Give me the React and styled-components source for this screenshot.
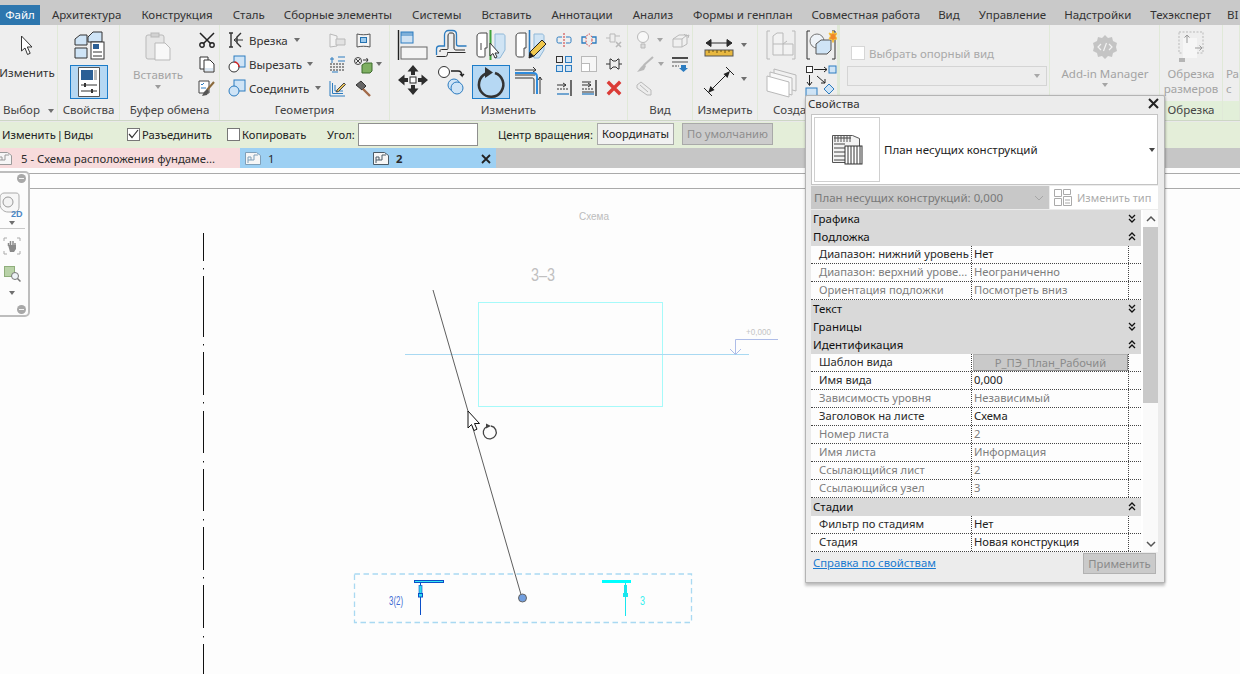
import React from "react";
import styled, { createGlobalStyle } from "styled-components";

const GlobalStyle = createGlobalStyle`
  html, body {
    margin: 0;
    padding: 0;
    background: #fdfdfd;
    overflow: hidden;
  }
  * { box-sizing: border-box; }
`;

const Page = styled.div`
  position: relative;
  width: 1240px;
  height: 674px;
  overflow: hidden;
  display: flex;
  flex-direction: column;
  font-family: "Noto Sans", "Liberation Sans", sans-serif;
  font-size: 11.5px;
  color: #333;
  background: #fdfdfd;
`;

/* menu */
const MenuBar = styled.div`
  height: 25px;
  flex: none;
  display: flex;
  align-items: flex-end;
  background: #c9c9c9;
  white-space: nowrap;
  overflow: hidden;
`;
const FileTab = styled.div`
  width: 40px;
  height: 20px;
  flex: none;
  background: #2d76ae;
  color: #fff;
  text-align: center;
  line-height: 20px;
  margin-right: 12px;
`;
const MenuItem = styled.div`
  height: 20px;
  flex: none;
  line-height: 20px;
  margin-right: ${(p) => p.$gap}px;
  color: #333;
`;

/* ribbon */
const Ribbon = styled.div`
  height: 96px;
  flex: none;
  display: flex;
  background: #eeeeee;
  border-bottom: 1px solid #cdd6c5;
  overflow: hidden;
`;
const Panel = styled.div`
  width: ${(p) => p.$w}px;
  flex: none;
  display: flex;
  flex-direction: column;
  border-right: ${(p) => p.$edge || 1}px solid #e0e9d8;
`;
const PanelBody = styled.div`
  height: 76px;
  flex: none;
  display: flex;
  padding: ${(p) => p.$pad || "0"};
  gap: ${(p) => p.$gap || 0}px;
  overflow: hidden;
`;
const PanelLabel = styled.div`
  height: 19px;
  line-height: 18px;
  text-align: ${(p) => p.$align || "center"};
  padding-left: ${(p) => p.$pl || 0}px;
  white-space: nowrap;
  overflow: hidden;
  color: #444;
  background: ${(p) => (p.$green ? "#e2efd9" : "transparent")};
`;
const BigTool = styled.div`
  width: ${(p) => p.$w || 58}px;
  display: flex;
  flex-direction: column;
  align-items: center;
  padding-top: ${(p) => p.$top || 7}px;
  line-height: 15px;
  color: ${(p) => (p.$off ? "#a3a3a3" : "#333")};
  white-space: nowrap;
  flex: none;
`;
const ToolText = styled.div`
  margin-top: ${(p) => p.$mt || 0}px;
  text-align: ${(p) => p.$align || "center"};
`;
const Caret = styled.span`
  display: inline-block;
  flex: none;
  width: 0;
  height: 0;
  border-left: 3.5px solid transparent;
  border-right: 3.5px solid transparent;
  border-top: 4px solid ${(p) => p.$c || "#6f6f6f"};
  margin: ${(p) => p.$m || "0"};
`;
const SelectedTool = styled.div`
  display: flex;
  align-items: center;
  justify-content: center;
  width: ${(p) => p.$w}px;
  height: ${(p) => p.$h}px;
  background: #b6d8f3;
  border: 1px solid #1c7cc9;
`;
const Column = styled.div`
  display: flex;
  flex-direction: column;
  align-items: ${(p) => p.$align || "flex-start"};
  gap: ${(p) => p.$gap || 0}px;
  padding-top: ${(p) => p.$top || 0}px;
  margin-left: ${(p) => p.$ml || 0}px;
  flex: none;
`;
const SmallRow = styled.div`
  height: 24px;
  display: flex;
  align-items: center;
  gap: ${(p) => p.$gap || 0}px;
  white-space: nowrap;
  color: #333;
`;
const IconSlot = styled.div`
  width: ${(p) => p.$w || 24}px;
  height: ${(p) => p.$h || 24}px;
  margin-top: ${(p) => p.$mt || 0}px;
  display: flex;
  align-items: center;
  justify-content: center;
  flex: none;
`;
const ToolGrid = styled.div`
  display: grid;
  grid-template-columns: repeat(${(p) => p.$cols}, ${(p) => p.$cw}px);
  grid-auto-rows: ${(p) => p.$rh}px;
  justify-items: center;
  align-items: ${(p) => p.$items || "center"};
  margin: ${(p) => p.$m || "0"};
  flex: none;
`;
const CheckRow = styled.div`
  display: flex;
  align-items: center;
  gap: 4px;
  color: ${(p) => (p.$off ? "#a9a9a9" : "#333")};
  margin-top: 21px;
  margin-left: 11px;
  height: 14px;
  white-space: nowrap;
`;
const BoxMark = styled.span`
  width: ${(p) => p.$s || 13}px;
  height: ${(p) => p.$s || 13}px;
  flex: none;
  background: #fff;
  border: 1px solid ${(p) => p.$c || "#777"};
  display: flex;
  align-items: center;
  justify-content: center;
`;
const DisabledCombo = styled.div`
  width: 200px;
  height: 20px;
  margin: 6px 0 0 7px;
  background: #ededed;
  border: 1px solid #d4d4d4;
  display: flex;
  align-items: center;
  justify-content: flex-end;
  padding-right: 6px;
`;

/* options bar */
const OptionsBar = styled.div`
  height: 27px;
  flex: none;
  display: flex;
  align-items: center;
  padding: 0 0 2px 2px;
  background: #e4eed9;
  color: #222;
  font-size: 11.2px;
  white-space: nowrap;
  border-top: 1px solid #e9e9e9;
`;
const OptionLabel = styled.div`
  display: flex;
  align-items: center;
  gap: 2px;
  margin-left: ${(p) => p.$ml || 0}px;
  width: ${(p) => (p.$w ? `${p.$w}px` : "auto")};
  word-spacing: ${(p) => p.$ws || 0}px;
  flex: none;
`;
const AngleInput = styled.div`
  width: 120px;
  height: 23px;
  background: #fff;
  border: 1px solid #8f8f8f;
  flex: none;
`;
const OptionButton = styled.div`
  height: 22px;
  line-height: 19px;
  padding: 0 2px;
  text-align: center;
  width: ${(p) => p.$w}px;
  margin-left: ${(p) => p.$ml}px;
  background: ${(p) => (p.$off ? "#cccccc" : "#f1f1f1")};
  color: ${(p) => (p.$off ? "#8e8e8e" : "#222")};
  border: 1px solid #a9a9a9;
  flex: none;
`;

/* view tabs */
const TabStrip = styled.div`
  height: 20px;
  flex: none;
  display: flex;
  background: #c6c6c6;
  white-space: nowrap;
  font-size: 11.3px;
  overflow: hidden;
`;
const ViewTab = styled.div`
  width: ${(p) => p.$w}px;
  display: flex;
  align-items: center;
  padding: 1px 0 0 ${(p) => p.$pl}px;
  gap: ${(p) => p.$gap}px;
  background: ${(p) => p.$bg};
  color: #2b2b2b;
  font-weight: ${(p) => (p.$active ? 700 : 400)};
  flex: none;
  overflow: hidden;
`;
const TabClose = styled.span`
  margin-left: auto;
  margin-right: 5px;
  display: flex;
`;

/* canvas */
const Canvas = styled.div`
  position: relative;
  flex: 1;
  background: #fdfdfd;
`;
const CanvasRule = styled.div`
  height: ${(p) => p.$h}px;
  border-bottom: 1px solid #a9a9a9;
`;
const Drawing = styled.svg`
  position: absolute;
  left: 0;
  top: 0;
`;
const DrawText = styled.text`
  font-family: "Liberation Sans", sans-serif;
`;
const NavBar = styled.div`
  position: absolute;
  left: -4px;
  top: 3px;
  width: 34px;
  height: 146px;
  background: #fcfcfc;
  border: 2px solid #bdbdbd;
  border-radius: 5px;
  display: flex;
  flex-direction: column;
  align-items: center;
  padding: 1px 2px 0 0;
`;
const NavDot = styled.div`
  align-self: flex-end;
  margin-right: 0;
  width: 9px;
  height: 9px;
  border-radius: 50%;
  background: #a8a8a8;
  display: flex;
  align-items: center;
  justify-content: center;
  margin-top: ${(p) => p.$mt || 0}px;
  &::after {
    content: "";
    width: 5px;
    height: 1px;
    background: #f4f4f4;
  }
`;
const NavRule = styled.div`
  width: 26px;
  height: 1px;
  background: #c9c9c9;
  margin: 3px 0 6px;
`;

/* properties palette */
const Palette = styled.div`
  position: absolute;
  left: 805px;
  top: 95px;
  width: 360px;
  height: 488px;
  background: #ececec;
  border: 1px solid #b4b4b4;
  border-radius: 2px 2px 0 0;
  box-shadow: 0 3px 3px rgba(0, 0, 0, 0.22), 1px 0 2px rgba(0, 0, 0, 0.15);
  padding: 0 6px 0 5px;
  display: flex;
  flex-direction: column;
`;
const PaletteTitle = styled.div`
  height: 18px;
  flex: none;
  display: flex;
  align-items: center;
  justify-content: space-between;
  margin: 0 -1px 0 -3px;
  padding-bottom: 3px;
  color: #333;
`;
const TypeBox = styled.div`
  height: 71px;
  flex: none;
  background: #fff;
  border: 1px solid #c4c4c4;
  padding: 2px;
  display: flex;
  align-items: center;
  color: #222;
`;
const TypeThumb = styled.div`
  width: 66px;
  height: 65px;
  flex: none;
  border: 1px solid #cfcfcf;
  display: flex;
  align-items: center;
  justify-content: center;
  margin-right: 4px;
`;
const TypeRow = styled.div`
  height: 25px;
  flex: none;
  display: flex;
  padding-top: 1px;
`;
const InstanceCombo = styled.div`
  width: 238px;
  height: 23px;
  flex: none;
  background: #c8c8c8;
  color: #797979;
  display: flex;
  align-items: center;
  justify-content: space-between;
  padding: 0 5px 0 3px;
`;
const EditType = styled.div`
  flex: 1;
  height: 23px;
  background: #fff;
  color: #acacac;
  font-size: 11px;
  display: flex;
  align-items: center;
  gap: 5px;
  padding-left: 4px;
  margin-left: 1px;
  white-space: nowrap;
`;
const TableWrap = styled.div`
  height: 342px;
  flex: none;
  display: flex;
  background: #fff;
  overflow: hidden;
`;
const Table = styled.div`
  width: 330px;
  flex: none;
`;
const SectionRow = styled.div`
  height: 18px;
  display: flex;
  align-items: center;
  justify-content: space-between;
  padding: 0 5px 1px 2px;
  background: #d9d9d9;
  color: #111;
`;
const PropRow = styled.div`
  height: 18px;
  display: grid;
  grid-template-columns: 161px 157px 1fr;
  border-bottom: 1px dotted #444;
  background: #fdfdfd;
  font-size: 11.2px;
`;
const PropName = styled.div`
  padding-left: 8px;
  line-height: 16px;
  color: ${(p) => (p.$dim ? "#7d7d7d" : "#2a2a2a")};
  white-space: nowrap;
  overflow: hidden;
  border-right: 1px dotted #444;
`;
const PropValue = styled.div`
  padding-left: 2px;
  line-height: 16px;
  color: ${(p) => (p.$dim ? "#7d7d7d" : "#222")};
  white-space: nowrap;
  overflow: hidden;
  border-right: 1px dotted #444;
`;
const TemplateButton = styled.div`
  height: 17px;
  line-height: 15px;
  margin-left: -1px;
  text-align: center;
  color: #8b8b8b;
  background: #c9c9c9;
  border: 1px solid #b2b2b2;
  border-right-color: #8f8f8f;
  border-bottom-color: #8f8f8f;
`;
const ScrollBar = styled.div`
  width: 16px;
  margin-left: 2px;
  flex: none;
  display: flex;
  flex-direction: column;
  align-items: center;
  background: #fafafa;
`;
const ScrollArrow = styled.div`
  height: 17px;
  flex: none;
  display: flex;
  align-items: center;
  justify-content: center;
`;
const ScrollThumb = styled.div`
  height: 176px;
  width: 100%;
  flex: none;
  background: #c9c9c9;
`;
const ScrollFill = styled.div`
  flex: 1;
`;
const PaletteFooter = styled.div`
  flex: 1;
  display: flex;
  align-items: flex-start;
  justify-content: space-between;
  padding: 1px 2px 0 2px;
  font-size: 11.3px;
`;
const HelpLink = styled.a`
  color: #1a7ad0;
  text-decoration: underline;
  line-height: 20px;
`;
const ApplyButton = styled.div`
  width: 73px;
  height: 21px;
  line-height: 19px;
  text-align: center;
  background: #cacaca;
  border: 1px solid #b2b2b2;
  color: #8a8a8a;
`;

/* icon drawing */
const Ico = styled.svg`
  display: block;
  flex: none;
  overflow: visible;
  margin-left: ${(p) => p.$ml || 0}px;
`;
const Svg = ({ w, h, ml, children }) => (
  <Ico width={w} height={h} viewBox={`0 0 ${w} ${h}`} fill="none" $ml={ml}>
    {children}
  </Ico>
);

const B = "#2c7cc0";
const BF = "#cfe4f6";
const G = "#b9b9b9";

const CursorIcon = () => (
  <Svg w={14} h={21}>
    <path d="M1.500 1v15l3.500-3 2.500 6.500 2.700-1.200L7.300 12h4.700z" fill="#fff" stroke="#333" />
  </Svg>
);
const CubesIcon = () => (
  <Svg w={30} h={29}>
    <path d="M1 8l5-4h7v10H1z" fill={BF} stroke="#333" />
    <path d="M1 17h12v10H1z" fill={BF} stroke="#333" />
    <path d="M14 6l5-5h9v10H14z" fill={BF} stroke="#333" />
    <rect x="17" y="11" width="13" height="17" fill="#fff" stroke="#333" />
    <rect x="19" y="13" width="6" height="5" fill="#2b5f95" />
    <path d="M19 21h9M19 25h9" stroke="#333" />
  </Svg>
);
const PropsIcon = () => (
  <Svg w={22} h={30}>
    <path d="M.5.5h21v29H.5z" fill="#fff" stroke="#555" />
    <rect x="3" y="3" width="12" height="10" fill="#2b5f95" />
    <rect x="16" y="3" width="3" height="10" fill="#bbb" />
    <path d="M3 18h16M3 24h16" stroke="#333" />
    <path d="M7 16v4M14 22v4" stroke="#333" strokeWidth="2" />
  </Svg>
);
const ClipboardIcon = () => (
  <Svg w={27} h={29}>
    <rect x="1" y="3" width="18" height="24" rx="2" fill="#e6e6e6" stroke={G} />
    <rect x="6" y="1" width="8" height="4" fill="#d2d2d2" stroke={G} />
    <path d="M10 11h10l5 5v12H10z" fill="#f8f8f8" stroke={G} />
  </Svg>
);
const ScissorsIcon = () => (
  <Svg w={16} h={16}>
    <path d="M1 1l11 11M15 1L4 12" stroke="#222" strokeWidth="1.500" />
    <circle cx="3" cy="13" r="2.200" stroke="#222" strokeWidth="1.400" />
    <circle cx="13" cy="13" r="2.200" stroke="#222" strokeWidth="1.400" />
  </Svg>
);
const CopyIcon = () => (
  <Svg w={16} h={16}>
    <path d="M1 1h8v12H1z" fill="#fff" stroke="#333" />
    <path d="M5 4h6l4 4v8H5z" fill="#fff" stroke="#333" />
    <path d="M6 12h8v3H6z" fill="#dbe7f2" />
  </Svg>
);
const BrushIcon = () => (
  <Svg w={17} h={17}>
    <path d="M1 1h10v12H1z" fill="#fff" stroke="#444" />
    <path d="M3 4l1 1 2-2M3 8h5" stroke={B} />
    <path d="M16 2L9 10" stroke="#8b6a3c" strokeWidth="2" />
    <path d="M9 9l-3 3-2 4 5-1 2-4z" fill="#555" />
  </Svg>
);
const CopeIcon = () => (
  <Svg w={17} h={16}>
    <path d="M1 1h4M1 15h4M3 1v14M13 1l-4 4v6l4 4" stroke="#333" strokeWidth="1.400" />
    <path d="M6 8h9M6 8l3-2.500M6 8l3 2.500" stroke="#333" />
  </Svg>
);
const CutIcon = () => (
  <Svg w={18} h={18}>
    <rect x="6" y="1" width="11" height="11" fill={BF} stroke={B} />
    <circle cx="6" cy="12" r="5" fill="#fff" stroke="#333" />
    <path d="M6.500 7A5 5 0 0 1 11 12" stroke="#d22" strokeWidth="1.400" />
  </Svg>
);
const JoinIcon = () => (
  <Svg w={18} h={18}>
    <rect x="6" y="1" width="11" height="11" fill={BF} stroke={B} />
    <circle cx="6" cy="12" r="5" fill={BF} stroke={B} />
  </Svg>
);
const WallCutIcon = () => (
  <Svg w={17} h={15}>
    <path d="M1 1l7 2v10l-7 1z" fill="#f3f3f3" stroke={G} />
    <path d="M7 6h9v6H7z" fill="#e2e2e2" stroke={G} />
  </Svg>
);
const FrameBoxIcon = () => (
  <Svg w={15} h={16}>
    <path d="M1 2c4 1 9 1 13 0v13c-4-1-9-1-13 0z" fill="#f4f4f4" stroke="#555" />
    <rect x="4.500" y="5.500" width="6" height="5" fill="#9cc9ec" stroke="#2472b0" />
  </Svg>
);
const GridDimIcon = () => (
  <Svg w={17} h={17}>
    <path d="M3 1v6M1 3h4M9 1h7M9 5h7" stroke={B} />
    <path d="M1 8h15M1 11h15M1 14h15" stroke="#333" strokeDasharray="2 1" />
    <path d="M3 16h6" stroke={B} />
  </Svg>
);
const CubeLinkIcon = () => (
  <Svg w={20} h={17}>
    <circle cx="5" cy="5" r="3.500" stroke="#444" />
    <path d="M3 3l4 4M7 3L3 7" stroke="#444" />
    <path d="M10 4h5l-1.500-2M15 4l-1.500 2" stroke="#333" />
    <path d="M9 9l3-2h7v8l-2 2H9z" fill="#7fb062" stroke="#3d6b2d" />
  </Svg>
);
const StairPencilIcon = () => (
  <Svg w={17} h={17}>
    <path d="M1 1v15h15M3.500 3v10.500H14M6 5v6h8" stroke={B} />
    <path d="M8 10l7-7 1.500 1.500-7 7-2 .5z" fill="#e9c35c" stroke="#444" />
  </Svg>
);
const HammerIcon = () => (
  <Svg w={17} h={17}>
    <path d="M1 5l5-4 5 5-4 4z" fill="#666" stroke="#333" />
    <path d="M8 9l7 7" stroke="#a26a48" strokeWidth="2.400" />
  </Svg>
);
const AlignIcon = () => (
  <Svg w={30} h={30}>
    <path d="M.5 0v30" stroke="#222" strokeWidth="1.400" />
    <rect x="3" y="2" width="12" height="11" fill="#cfe2f3" stroke={B} />
    <path d="M3 2h12v4H3z" fill={B} opacity=".5" />
    <rect x="3" y="17" width="26" height="12" fill="#f4f4f4" stroke="#666" />
  </Svg>
);
const OffsetIcon = () => (
  <Svg w={31} h={27}>
    <path d="M.5 25v-6c0-2 1-3 3-3h5V5c0-3 2-4.500 4-4.500h4c3 0 4 2 4 4V14c0 1.500 1 2 2 2h8" stroke={B} strokeWidth="1.300" />
    <path d="M.5 26.500h9c1 0 2-1 2-3v-1h18M4 22v-1c0-1 .5-1.500 1.500-1.500H11c1 0 1-.5 1-2V6c0-2 1-3 2-3h2c1.500 0 2 1 2 2v13c0 1.500 1 2 2 2h9" stroke="#2e2e2e" />
  </Svg>
);
const MirrorAIcon = () => (
  <Svg w={30} h={30}>
    <path d="M1 6c0-2 2-3 4-3h6v15H9v8c0 1-1 1-2 1H4c-2 0-3-1-3-3z" fill="#fff" stroke="#444" />
    <path d="M5 13v7" stroke="#444" />
    <path d="M14.500 0v30" stroke="#3fa43c" strokeWidth="2" />
    <path d="M19 4h8c1 0 2 1 2 2v14l-5 8h-5z" fill="#d0e4f4" stroke="#8fb8d8" />
    <path d="M14 13v13l3-2.500 2 4.500 2-1-2-4h4z" fill="#fff" stroke="#333" />
  </Svg>
);
const MirrorBIcon = () => (
  <Svg w={30} h={30}>
    <path d="M1 6c0-2 2-3 4-3h6v15H9v8c0 1-1 1-2 1H4c-2 0-3-1-3-3z" fill="#fff" stroke="#444" />
    <path d="M14.500 0v26" stroke={B} strokeWidth="1.600" />
    <path d="M19 4h8c1 0 2 1 2 2v14l-5 8h-5z" fill="#d0e4f4" stroke="#8fb8d8" />
    <path d="M14 28l1-6 12-12 4 4-12 12z" fill="#f0c84e" stroke="#222" />
    <path d="M14 28l1-6 4 4z" fill="#222" />
  </Svg>
);
const MoveIcon = () => (
  <Svg w={30} h={30}>
    <path d="M15 0l5.500 6.500H17V10h-4V6.500H9.500zM15 30l5.500-6.500H17V20h-4v3.500H9.500zM0 15l6.500-5.500V13H10v4H6.500v3.500zM30 15l-6.500-5.500V13H20v4h3.500v3.500z" fill="#2d2d2d" />
    <rect x="12" y="12" width="6" height="6" fill="#fff" stroke="#2d2d2d" />
  </Svg>
);
const CopyElIcon = () => (
  <Svg w={29} h={30}>
    <circle cx="7" cy="7" r="5.500" fill="#fff" stroke="#333" />
    <path d="M14 6h7c3 0 4 2 4 5l-2-2M25 11l2-2" stroke="#222" strokeWidth="1.300" />
    <circle cx="17" cy="20" r="6" fill="#d0e4f6" stroke={B} />
    <circle cx="20" cy="23" r="6" fill="#cfe4f6" stroke={B} />
  </Svg>
);
const RotateIcon = () => (
  <Svg w={28} h={30}>
    <path d="M9 6.500A12.200 12.200 0 1 0 18 6" stroke="#333" strokeWidth="2.600" />
    <path d="M8 0l8 5.500-8 5.500z" fill="#333" />
  </Svg>
);
const TrimIcon = () => (
  <Svg w={31} h={30}>
    <path d="M1 5h20M1 10h20M19 2l3 3-3 2" stroke="#333" />
    <path d="M1 8h18c2 0 4 1 4 4v17" stroke="#2e8bdc" strokeWidth="2" />
    <path d="M1 13h17c1 0 2 0 2 2v14M26 29V12" stroke="#333" />
    <path d="M24 15l2-3 2 3" stroke="#333" />
  </Svg>
);
const SplitIcon = () => (
  <Svg w={16} h={14}>
    <path d="M6 4H2.500Q1 4 1 5.500v3Q1 10 2.500 10H6M10 4h3.500Q15 4 15 5.500v3q0 1.500-1.500 1.500H10" stroke={B} />
    <path d="M8 0v14" stroke="#c33" strokeDasharray="2 1" />
  </Svg>
);
const SplitGapIcon = () => (
  <Svg w={16} h={14}>
    <path d="M5 4H1v6h4M11 4h4v6h-4" stroke={B} strokeWidth="1.300" />
    <ellipse cx="8" cy="7" rx="3" ry="6" stroke="#c33" strokeDasharray="1.500 1.500" />
  </Svg>
);
const PinXIcon = () => (
  <Svg w={17} h={16}>
    <path d="M1 6h4M5 2h5v8H5zM10 4h5" stroke={G} />
    <path d="M11 10l5 5M16 10l-5 5" stroke={G} strokeWidth="1.600" />
  </Svg>
);
const ArrayIcon = () => (
  <Svg w={16} h={16}>
    <rect x=".5" y=".5" width="6" height="6" stroke="#333" />
    <rect x="9.500" y=".5" width="6" height="6" fill={BF} stroke={B} />
    <rect x=".5" y="9.500" width="6" height="6" fill={BF} stroke={B} />
    <rect x="9.500" y="9.500" width="6" height="6" fill={BF} stroke={B} />
  </Svg>
);
const ScaleIcon = () => (
  <Svg w={16} h={16}>
    <rect x=".5" y=".5" width="15" height="15" stroke={G} fill="#f6f6f6" />
    <rect x=".5" y="7.500" width="8" height="8" stroke={G} fill="#fff" />
  </Svg>
);
const PinIcon = () => (
  <Svg w={16} h={14}>
    <path d="M0 7h4M4 2h1l2 2h3l2-2h1v10h-1l-2-2H7l-2 2H4zM13 7h3" stroke="#333" />
  </Svg>
);
const TrimManyIcon = ({ many }) => (
  <Svg w={16} h={16}>
    <path d="M15 0v16" stroke="#333" strokeWidth="1.400" />
    <path d="M1 5h9M7 3l3 2-3 2" stroke="#333" />
    <path d="M1 9h12" stroke="#333" strokeDasharray="2 1" />
    {many && <path d="M1 12h12M1 2h9" stroke="#333" />}
    <path d="M1 14h12" stroke={B} strokeWidth="1.300" />
  </Svg>
);
const DeleteIcon = () => (
  <Svg w={14} h={14}>
    <path d="M2 2l10 10M12 2L2 12" stroke="#db3b36" strokeWidth="3.400" strokeLinecap="square" />
  </Svg>
);
const LampIcon = () => (
  <Svg w={14} h={18}>
    <circle cx="7" cy="6" r="5.500" fill="#f8f8f8" stroke={G} />
    <path d="M5 13h4v4H5z" fill="#ddd" stroke={G} />
  </Svg>
);
const GhostBoxIcon = () => (
  <Svg w={18} h={15}>
    <path d="M1 6l6-4h8v9l-5 3H1z" fill="#f0f0f0" stroke={G} />
    <path d="M1 6h9v8M10 6l5-4" stroke={G} />
    <path d="M12 1l2 2 3-1-1 3" stroke={G} />
  </Svg>
);
const PaintIcon = () => (
  <Svg w={18} h={17}>
    <path d="M17 1L8 9" stroke={G} strokeWidth="2" />
    <path d="M8 8l-3 3-4 5 7-2 2-4z" fill={G} />
  </Svg>
);
const LinesDownIcon = () => (
  <Svg w={17} h={15}>
    <path d="M0 1h16" stroke="#222" strokeWidth="1.600" />
    <path d="M0 5h16" stroke="#555" />
    <path d="M0 9h7" stroke="#555" strokeDasharray="2 1" />
    <path d="M9 8h5v3h2l-4.500 4L7 11h2z" fill={B} />
  </Svg>
);
const GhostSectionIcon = () => (
  <Svg w={16} h={15}>
    <path d="M1 4l4-3 10 8v5l-4 0L1 7z" fill="#ededed" stroke={G} />
    <path d="M4 4l8 7" stroke={G} />
  </Svg>
);
const RulerIcon = () => (
  <Svg w={30} h={20}>
    <path d="M2 5h26M2 5l5-3.500V8.500zM28 5l-5-3.500V8.500z" fill="#2c2c2c" stroke="#2c2c2c" />
    <rect x="1" y="12" width="28" height="6" fill="#e8b83f" stroke="#555" />
    <path d="M5 12v3M9 12v2M13 12v3M17 12v2M21 12v3M25 12v2" stroke="#6a5216" />
  </Svg>
);
const AlignedDimIcon = () => (
  <Svg w={30} h={30}>
    <path d="M0 21l8 8M22 0l8 8" stroke="#222" />
    <path d="M5 25L25 5" stroke="#222" />
    <path d="M4 26l2.500-7 4 4zM26 4l-2.500 7-4-4z" fill="#222" />
  </Svg>
);
const HouseBoxIcon = () => (
  <Svg w={30} h={30}>
    <path d="M4 1H1v28h3M26 1h3v28h-3" stroke={G} />
    <path d="M7 6l4-3h6v11h10v11H7z" fill="#f2f2f2" stroke={G} />
    <path d="M7 14h10v11M17 14l4-3" stroke={G} />
  </Svg>
);
const SheetsIcon = () => (
  <Svg w={32} h={33}>
    <path d="M8 4l22 6v16L8 20z" fill="#f1f1f1" stroke={G} />
    <path d="M4 7l22 6v17L4 24z" fill="#f8f8f8" stroke={G} />
    <path d="M1 11l22 6v15L1 26z" fill="#fff" stroke={G} />
  </Svg>
);
const FamilyStarIcon = () => (
  <Svg w={31} h={30}>
    <path d="M4 1H1v28h3M26 1h3v28h-3" stroke="#333" />
    <circle cx="11" cy="11" r="7" fill="#eef3f8" stroke="#777" />
    <path d="M10 14l5-4h10v10l-4 4H10z" fill={BF} stroke="#555" />
    <path d="M27 1l1 3 3-1-1.500 3L31 9l-3 .5-1 3-1-3-3-.5 1.500-3L23 3l3 1z" fill="#f0882a" stroke="#f6c23a" />
  </Svg>
);
const FlowIcon = () => (
  <Svg w={33} h={32}>
    <rect x=".5" y="1.500" width="6" height="6" fill="#fff" stroke="#333" />
    <path d="M8 4.500h13M18 2l3 2.500L18 7" stroke="#222" />
    <rect x="23" y="1" width="7" height="7" fill={BF} stroke={B} />
    <path d="M3.500 10v10M1 17l2.500 3.500L6 17" stroke="#222" />
    <path d="M11 11l8 7M15 18h4v-4" stroke="#222" />
    <rect x="0" y="23" width="11" height="8" fill={BF} stroke={B} />
    <path d="M23 19l5 5-5 5-5-5z" fill={BF} stroke={B} />
  </Svg>
);
const AddinIcon = () => (
  <Svg w={26} h={26}>
    <path d="M13 1l3 3 4-1 1 4 4 2-1 4 1 4-4 2-1 4-4-1-3 3-3-3-4 1-1-4-4-2 1-4-1-4 4-2 1-4 4 1z" fill="#c4c4c4" />
    <path d="M9 10l-3 3 3 3M17 10l3 3-3 3M14.500 9l-3 8" stroke="#f2f2f2" strokeWidth="1.200" />
  </Svg>
);
const CropIcon = () => (
  <Svg w={27} h={32}>
    <path d="M1 1h24v21H1z" stroke={G} strokeDasharray="2 1.500" />
    <path d="M5 7h14v20H5z" fill="#f6f6f6" stroke="none" />
    <path d="M9 12V4M6.500 6.500L9 4l2.500 2.500M17 17h7M21.500 14.500L24 17l-2.500 2.500" stroke="#999" />
    <path d="M1 27h6v4H1z" fill="#b5b5b5" />
  </Svg>
);
const CheckMark = () => (
  <Svg w={11} h={10}>
    <path d="M1 5l3 3.500L10 1" stroke="#333" strokeWidth="1.200" />
  </Svg>
);
const PlanTabIcon = ({ c, ml }) => (
  <Svg w={16} h={13} ml={ml}>
    <path d="M.5.5h11l4 3v9H.5z" fill="#f6f6f6" stroke={c} />
    <path d="M3 11V5h3v3h3V3h4M3 8h3" stroke={c} />
  </Svg>
);
const CloseX = ({ s = 9, c = "#222", sw = 1.800 }) => (
  <Svg w={s} h={s}>
    <path d={`M1 1l${s - 2} ${s - 2}M${s - 1} 1L1 ${s - 1}`} stroke={c} strokeWidth={sw} />
  </Svg>
);
const PlanThumbIcon = () => (
  <Svg w={31} h={30}>
    <path d="M.5.5h20l7 3v24H.5z" fill="#f3f3f3" stroke="#555" />
    <path d="M2 3h17M2 9h11M2 13h11M2 17h11M2 21h11M2 25h11" stroke="#444" />
    <path d="M3 1v6M6 1v6M9 1v6M12 1v6M15 1v6M18 1v6" stroke="#555" />
    <rect x="13" y="11" width="17" height="18" fill="#fff" stroke="#333" />
    <path d="M16 11v18M19 11v18M22 11v18M25 11v18M28 11v18" stroke="#333" />
  </Svg>
);
const EditTypeIcon = () => (
  <Svg w={18} h={17}>
    <path d="M.5.5h7v7h-7zM9.500.5h7v5h-7zM.5 9.500h7v7h-7z" fill="#fff" stroke="#aaa" />
    <path d="M9.500 7.500h8v9h-8z" fill="#fff" stroke="#aaa" />
    <path d="M11 11h5M11 14h5" stroke="#aaa" />
  </Svg>
);
const ComboChevron = () => (
  <Svg w={10} h={6}>
    <path d="M1 1l4 4 4-4" stroke="#a6a6a6" />
  </Svg>
);
const DoubleChevron = ({ up }) => (
  <Svg w={8} h={9}>
    <path
      d={up ? "M1 4l3-3 3 3M1 8l3-3 3 3" : "M1 1l3 3 3-3M1 5l3 3 3-3"}
      stroke="#111"
      strokeWidth="1.300"
    />
  </Svg>
);
const ScrollChevron = ({ up }) => (
  <Svg w={10} h={6}>
    <path d={up ? "M1 5l4-4 4 4" : "M1 1l4 4 4-4"} stroke="#555" strokeWidth="1.500" />
  </Svg>
);
const ViewCubeIcon = () => (
  <Svg w={26} h={26}>
    <path d="M5 1h12c2 0 3 1 3 3v11c0 2-1 4-3 5H9c-4 0-8-3-8-8V5c0-2 2-4 4-4z" fill="#f7f7f7" stroke="#aaa" />
    <circle cx="9" cy="10" r="5" fill="#f3f3f3" stroke="#999" />
    <text x="12" y="25" fontSize="9" fontWeight="700" fill="#4a86c6" fontFamily="Liberation Sans, sans-serif">
      2D
    </text>
  </Svg>
);
const HandIcon = () => (
  <Svg w={16} h={16}>
    <path d="M0 3V0h3M13 0h3v3M0 13v3h3M13 16h3v-3" stroke="#aaa" />
    <path d="M4.500 8V5M6.500 8V3M9 8V3M11 8V5" stroke="#8a8a8a" strokeWidth="1.500" />
    <path d="M4 7h8v4l-2 3H6z" fill="#8a8a8a" />
  </Svg>
);
const ZoomIcon = () => (
  <Svg w={17} h={17}>
    <rect x=".5" y=".5" width="10" height="10" fill="#b9d2a8" stroke="#8fae7b" />
    <circle cx="11" cy="10" r="3.500" fill="#eef3f7" stroke="#777" />
    <path d="M13.500 12.500l3 3" stroke="#777" strokeWidth="1.500" />
  </Svg>
);

const MENU = [
  ["Архитектура", 20], ["Конструкция", 20], ["Сталь", 19], ["Сборные элементы", 20],
  ["Системы", 20], ["Вставить", 20], ["Аннотации", 20], ["Анализ", 20],
  ["Формы и генплан", 19], ["Совместная работа", 18], ["Вид", 19], ["Управление", 18],
  ["Надстройки", 19], ["Техэксперт", 16], ["BI", 0],
];

const PROPS = [
  { section: "Графика" },
  { section: "Подложка", open: true },
  { name: "Диапазон: нижний уровень", value: "Нет" },
  { name: "Диапазон: верхний урове...", value: "Неограниченно", dim: true },
  { name: "Ориентация подложки", value: "Посмотреть вниз", dim: true },
  { section: "Текст" },
  { section: "Границы" },
  { section: "Идентификация", open: true },
  { name: "Шаблон вида", template: "Р_ПЭ_План_Рабочий" },
  { name: "Имя вида", value: "0,000" },
  { name: "Зависимость уровня", value: "Независимый", dim: true },
  { name: "Заголовок на листе", value: "Схема" },
  { name: "Номер листа", value: "2", dim: true },
  { name: "Имя листа", value: "Информация", dim: true },
  { name: "Ссылающийся лист", value: "2", dim: true },
  { name: "Ссылающийся узел", value: "3", dim: true },
  { section: "Стадии", open: true },
  { name: "Фильтр по стадиям", value: "Нет" },
  { name: "Стадия", value: "Новая конструкция" },
];

const AXIS_DASHES = [
  [233, 261], [276, 337], [352, 395], [411, 453], [469, 511], [527, 570], [585, 628], [644, 674],
];
const AXIS_DOTS = [268, 344, 402, 461, 519, 577, 636];

const PlanDrawing = () => (
  <Drawing width="1240" height="506" viewBox="0 168 1240 506" fill="none">
    {AXIS_DASHES.map(([a, b]) => (
      <path key={a} d={`M203.500 ${a}V${b}`} stroke="#111" />
    ))}
    {AXIS_DOTS.map((y) => (
      <rect key={y} x="203" y={y} width="1" height="1.500" fill="#111" />
    ))}

    <DrawText x="579" y="220" fontSize="11" fill="#bcbcbc" textLength="30" lengthAdjust="spacingAndGlyphs">
      Схема
    </DrawText>
    <DrawText x="531" y="281" fontSize="18" fill="#c0c0c0" textLength="24" lengthAdjust="spacingAndGlyphs">
      3–3
    </DrawText>
    <DrawText x="746" y="335" fontSize="9" fill="#c4c4c4" textLength="25" lengthAdjust="spacingAndGlyphs">
      +0,000
    </DrawText>

    <rect x="478.500" y="302.500" width="184" height="104" stroke="#a6fafa" />
    <path d="M405 354.500H749" stroke="#a9d9f2" />
    <path d="M778 339.500H735.500V354M730 349l5.500 5.500 5.500-5.500" stroke="#aebde8" />
    <path d="M433 290L522 598" stroke="#5e5e5e" />

    <path d="M468 411v17l3.500-3.500 2.500 6 3-1.300-2.500-5.700h5z" fill="#fff" stroke="#111" />
    <path d="M487 426.500A6.500 6.500 0 1 0 491 426" stroke="#444" strokeWidth="1.300" />
    <path d="M486 423.500l5 2.500-5 2.500z" fill="#444" />

    <rect x="354.500" y="574" width="337" height="48.500" stroke="#a9d9f2" strokeWidth="1.300" strokeDasharray="5.500 3.500" />

    <rect x="414.500" y="580.500" width="29" height="2" fill="#39e7f3" stroke="#0b4fc8" />
    <path d="M420.500 583V615" stroke="#0b4fc8" />
    <rect x="419" y="585.500" width="3" height="8" fill="#2cdcf0" stroke="#0b4fc8" strokeWidth=".6" />
    <rect x="418.500" y="593.500" width="4" height="3.500" fill="#2cdcf0" stroke="#0b4fc8" />
    <DrawText x="389" y="605" fontSize="12" fill="#3d6cd2" textLength="14" lengthAdjust="spacingAndGlyphs">
      3(2)
    </DrawText>

    <path d="M602 581.500H631" stroke="#0ff" strokeWidth="3" />
    <path d="M625.500 583V616" stroke="#19e6ee" />
    <path d="M625.500 585V594" stroke="#19e6ee" strokeWidth="3" />
    <rect x="623" y="593" width="5" height="4" fill="#19e6ee" />
    <DrawText x="640" y="605" fontSize="12" fill="#38efef" textLength="5" lengthAdjust="spacingAndGlyphs">
      3
    </DrawText>

    <circle cx="522.500" cy="598" r="4" fill="#729fdf" stroke="#666" />
  </Drawing>
);

export default function App() {
  return (
    <Page>
      <GlobalStyle />
      <MenuBar>
        <FileTab>Файл</FileTab>
        {MENU.map(([m, gap]) => (
          <MenuItem key={m} $gap={gap}>{m}</MenuItem>
        ))}
      </MenuBar>

      <Ribbon>
        <Panel $w={58}>
          <PanelBody>
            <BigTool $w={54} $top={10}>
              <CursorIcon />
              <ToolText $mt={9}>Изменить</ToolText>
            </BigTool>
          </PanelBody>
          <PanelLabel>
            Выбор <Caret $m="0 0 1px 5px" />
          </PanelLabel>
        </Panel>

        <Panel $w={62}>
          <PanelBody $pad="6px 0 0 0">
            <Column $align="center" $gap={5} $ml={12}>
              <CubesIcon />
              <SelectedTool $w={38} $h={34}>
                <PropsIcon />
              </SelectedTool>
            </Column>
          </PanelBody>
          <PanelLabel>Свойства</PanelLabel>
        </Panel>

        <Panel $w={100}>
          <PanelBody>
            <BigTool $w={76} $off>
              <ClipboardIcon />
              <ToolText $mt={6}>Вставить</ToolText>
              <Caret $c="#9b9b9b" $m="3px 0 0" />
            </BigTool>
            <Column $top={3} $align="center" $ml={2}>
              <SmallRow><ScissorsIcon /></SmallRow>
              <SmallRow><CopyIcon /></SmallRow>
              <SmallRow><BrushIcon /></SmallRow>
            </Column>
          </PanelBody>
          <PanelLabel>Буфер обмена</PanelLabel>
        </Panel>

        <Panel $w={170}>
          <PanelBody $pad="3px 0 0 8px">
            <Column>
              <SmallRow $gap={4}><IconSlot $w={17}><CopeIcon /></IconSlot>Врезка<Caret $m="0 0 0 2px" /></SmallRow>
              <SmallRow $gap={4}><IconSlot $w={17}><CutIcon /></IconSlot>Вырезать<Caret $m="0 0 0 1px" /></SmallRow>
              <SmallRow $gap={4}><IconSlot $w={17}><JoinIcon /></IconSlot>Соединить<Caret $m="0 0 0 2px" /></SmallRow>
            </Column>
            <ToolGrid $cols={2} $cw={26} $rh={24} $m="0 0 0 3px">
              <WallCutIcon />
              <FrameBoxIcon />
              <GridDimIcon />
              <CubeLinkIcon />
              <StairPencilIcon />
              <HammerIcon />
            </ToolGrid>
            <Column $top={34}><Caret /></Column>
          </PanelBody>
          <PanelLabel>Геометрия</PanelLabel>
        </Panel>

        <Panel $w={238}>
          <PanelBody $pad="5px 0 0 3px">
            <ToolGrid $cols={4} $cw={39} $rh={35} $items="start">
              <AlignIcon />
              <OffsetIcon />
              <MirrorAIcon />
              <MirrorBIcon />
              <MoveIcon />
              <CopyElIcon />
              <SelectedTool $w={38} $h={34}><RotateIcon /></SelectedTool>
              <TrimIcon />
            </ToolGrid>
            <ToolGrid $cols={3} $cw={25} $rh={24} $m="-2px 0 0 2px">
              <SplitIcon />
              <SplitGapIcon />
              <PinXIcon />
              <ArrayIcon />
              <ScaleIcon />
              <PinIcon />
              <TrimManyIcon />
              <TrimManyIcon many />
              <DeleteIcon />
            </ToolGrid>
          </PanelBody>
          <PanelLabel>Изменить</PanelLabel>
        </Panel>

        <Panel $w={65}>
          <PanelBody $pad="3px 0 0 8px">
            <Column>
              <SmallRow $gap={4}><LampIcon /><Caret $c="#a5a5a5" $m="0 0 0 3px" /></SmallRow>
              <SmallRow $gap={4}><PaintIcon /><Caret $c="#a5a5a5" /></SmallRow>
              <SmallRow><GhostSectionIcon /></SmallRow>
            </Column>
            <Column $ml={8}>
              <SmallRow><GhostBoxIcon /></SmallRow>
              <SmallRow><LinesDownIcon /></SmallRow>
            </Column>
          </PanelBody>
          <PanelLabel>Вид</PanelLabel>
        </Panel>

        <Panel $w={65}>
          <PanelBody $pad="11px 0 0 11px">
            <Column $gap={10}>
              <SmallRow $gap={7}><RulerIcon /><Caret $m="0 0 6px" /></SmallRow>
              <SmallRow $gap={7}><AlignedDimIcon /><Caret $m="0 0 6px" /></SmallRow>
            </Column>
          </PanelBody>
          <PanelLabel>Измерить</PanelLabel>
        </Panel>

        <Panel $w={82} $edge={3}>
          <PanelBody $pad="5px 0 0 8px" $gap={8}>
            <Column $gap={5}>
              <HouseBoxIcon />
              <SheetsIcon />
            </Column>
            <Column $gap={5}>
              <FamilyStarIcon />
              <FlowIcon />
            </Column>
          </PanelBody>
          <PanelLabel $align="left" $pl={15}>Созда</PanelLabel>
        </Panel>

        <Panel $w={210}>
          <PanelBody>
            <Column>
              <CheckRow $off>
                <BoxMark $s={14} $c="#d6d6d6" />
                Выбрать опорный вид
              </CheckRow>
              <DisabledCombo><Caret $c="#a8a8a8" /></DisabledCombo>
            </Column>
          </PanelBody>
          <PanelLabel />
        </Panel>

        <Panel $w={110}>
          <PanelBody>
            <BigTool $w={110} $top={9} $off>
              <AddinIcon />
              <ToolText $mt={6}>Add-in Manager</ToolText>
              <Caret $c="#a5a5a5" $m="2px 0 0" />
            </BigTool>
          </PanelBody>
          <PanelLabel />
        </Panel>

        <Panel $w={63}>
          <PanelBody>
            <BigTool $w={62} $top={6} $off>
              <CropIcon />
              <ToolText $mt={3}>Обрезка<br />размеров</ToolText>
            </BigTool>
          </PanelBody>
          <PanelLabel $green>Обрезка</PanelLabel>
        </Panel>

        <Panel $w={17}>
          <PanelBody $pad="0 0 0 2px">
            <BigTool $w={15} $top={41} $off>
              <ToolText $align="left">Ра<br />с</ToolText>
            </BigTool>
          </PanelBody>
          <PanelLabel $green />
        </Panel>
      </Ribbon>

      <OptionsBar>
        <OptionLabel $w={125} $ws={-2}>Изменить | Виды</OptionLabel>
        <OptionLabel $w={100}>
          <BoxMark><CheckMark /></BoxMark>
          Разъединить
        </OptionLabel>
        <OptionLabel $w={100}>
          <BoxMark />
          Копировать
        </OptionLabel>
        <OptionLabel $w={31}>Угол:</OptionLabel>
        <AngleInput />
        <OptionLabel $ml={20} $w={99}>Центр вращения:</OptionLabel>
        <OptionButton $w={77} $ml={0}>Координаты</OptionButton>
        <OptionButton $w={91} $ml={8} $off>По умолчанию</OptionButton>
      </OptionsBar>

      <TabStrip>
        <ViewTab $w={240} $bg="#f7dbdc" $pl={0} $gap={9}>
          <PlanTabIcon c="#9a9a9a" ml={-4} />
          5 - Схема расположения фундаме...
        </ViewTab>
        <ViewTab $w={128} $bg="#9dd0f3" $pl={5} $gap={7}>
          <PlanTabIcon c="#7f9fb8" />
          1
        </ViewTab>
        <ViewTab $w={128} $bg="#9dd0f3" $pl={5} $gap={7} $active>
          <PlanTabIcon c="#4a5a66" />
          2
          <TabClose><CloseX s={10} /></TabClose>
        </ViewTab>
      </TabStrip>

      <Canvas>
        <CanvasRule $h={6} />
        <CanvasRule $h={15} />
        <PlanDrawing />
        <NavBar>
          <NavDot />
          <IconSlot $w={26} $h={28} $mt={8}><ViewCubeIcon /></IconSlot>
          <Caret $m="2px 0 0" />
          <NavRule />
          <IconSlot $w={20} $h={22}><HandIcon /></IconSlot>
          <IconSlot $w={20} $h={28} $mt={3}><ZoomIcon /></IconSlot>
          <Caret $m="3px 0 0" />
          <NavDot $mt={10} />
        </NavBar>
      </Canvas>

      <Palette>
        <PaletteTitle>
          Свойства
          <CloseX s={11} sw={2} />
        </PaletteTitle>
        <TypeBox>
          <TypeThumb><PlanThumbIcon /></TypeThumb>
          План несущих конструкций
          <Caret $c="#444" $m="0 0 0 auto" />
        </TypeBox>
        <TypeRow>
          <InstanceCombo>
            План несущих конструкций: 0,000
            <ComboChevron />
          </InstanceCombo>
          <EditType>
            <EditTypeIcon />
            Изменить тип
          </EditType>
        </TypeRow>
        <TableWrap>
          <Table>
            {PROPS.map((p) =>
              p.section ? (
                <SectionRow key={p.section}>
                  {p.section}
                  <DoubleChevron up={p.open} />
                </SectionRow>
              ) : (
                <PropRow key={p.name}>
                  <PropName $dim={p.dim}>{p.name}</PropName>
                  <PropValue $dim={p.dim}>
                    {p.template ? <TemplateButton>{p.template}</TemplateButton> : p.value}
                  </PropValue>
                </PropRow>
              )
            )}
          </Table>
          <ScrollBar>
            <ScrollArrow><ScrollChevron up /></ScrollArrow>
            <ScrollThumb />
            <ScrollFill />
            <ScrollArrow><ScrollChevron /></ScrollArrow>
          </ScrollBar>
        </TableWrap>
        <PaletteFooter>
          <HelpLink>Справка по свойствам</HelpLink>
          <ApplyButton>Применить</ApplyButton>
        </PaletteFooter>
      </Palette>
    </Page>
  );
}
